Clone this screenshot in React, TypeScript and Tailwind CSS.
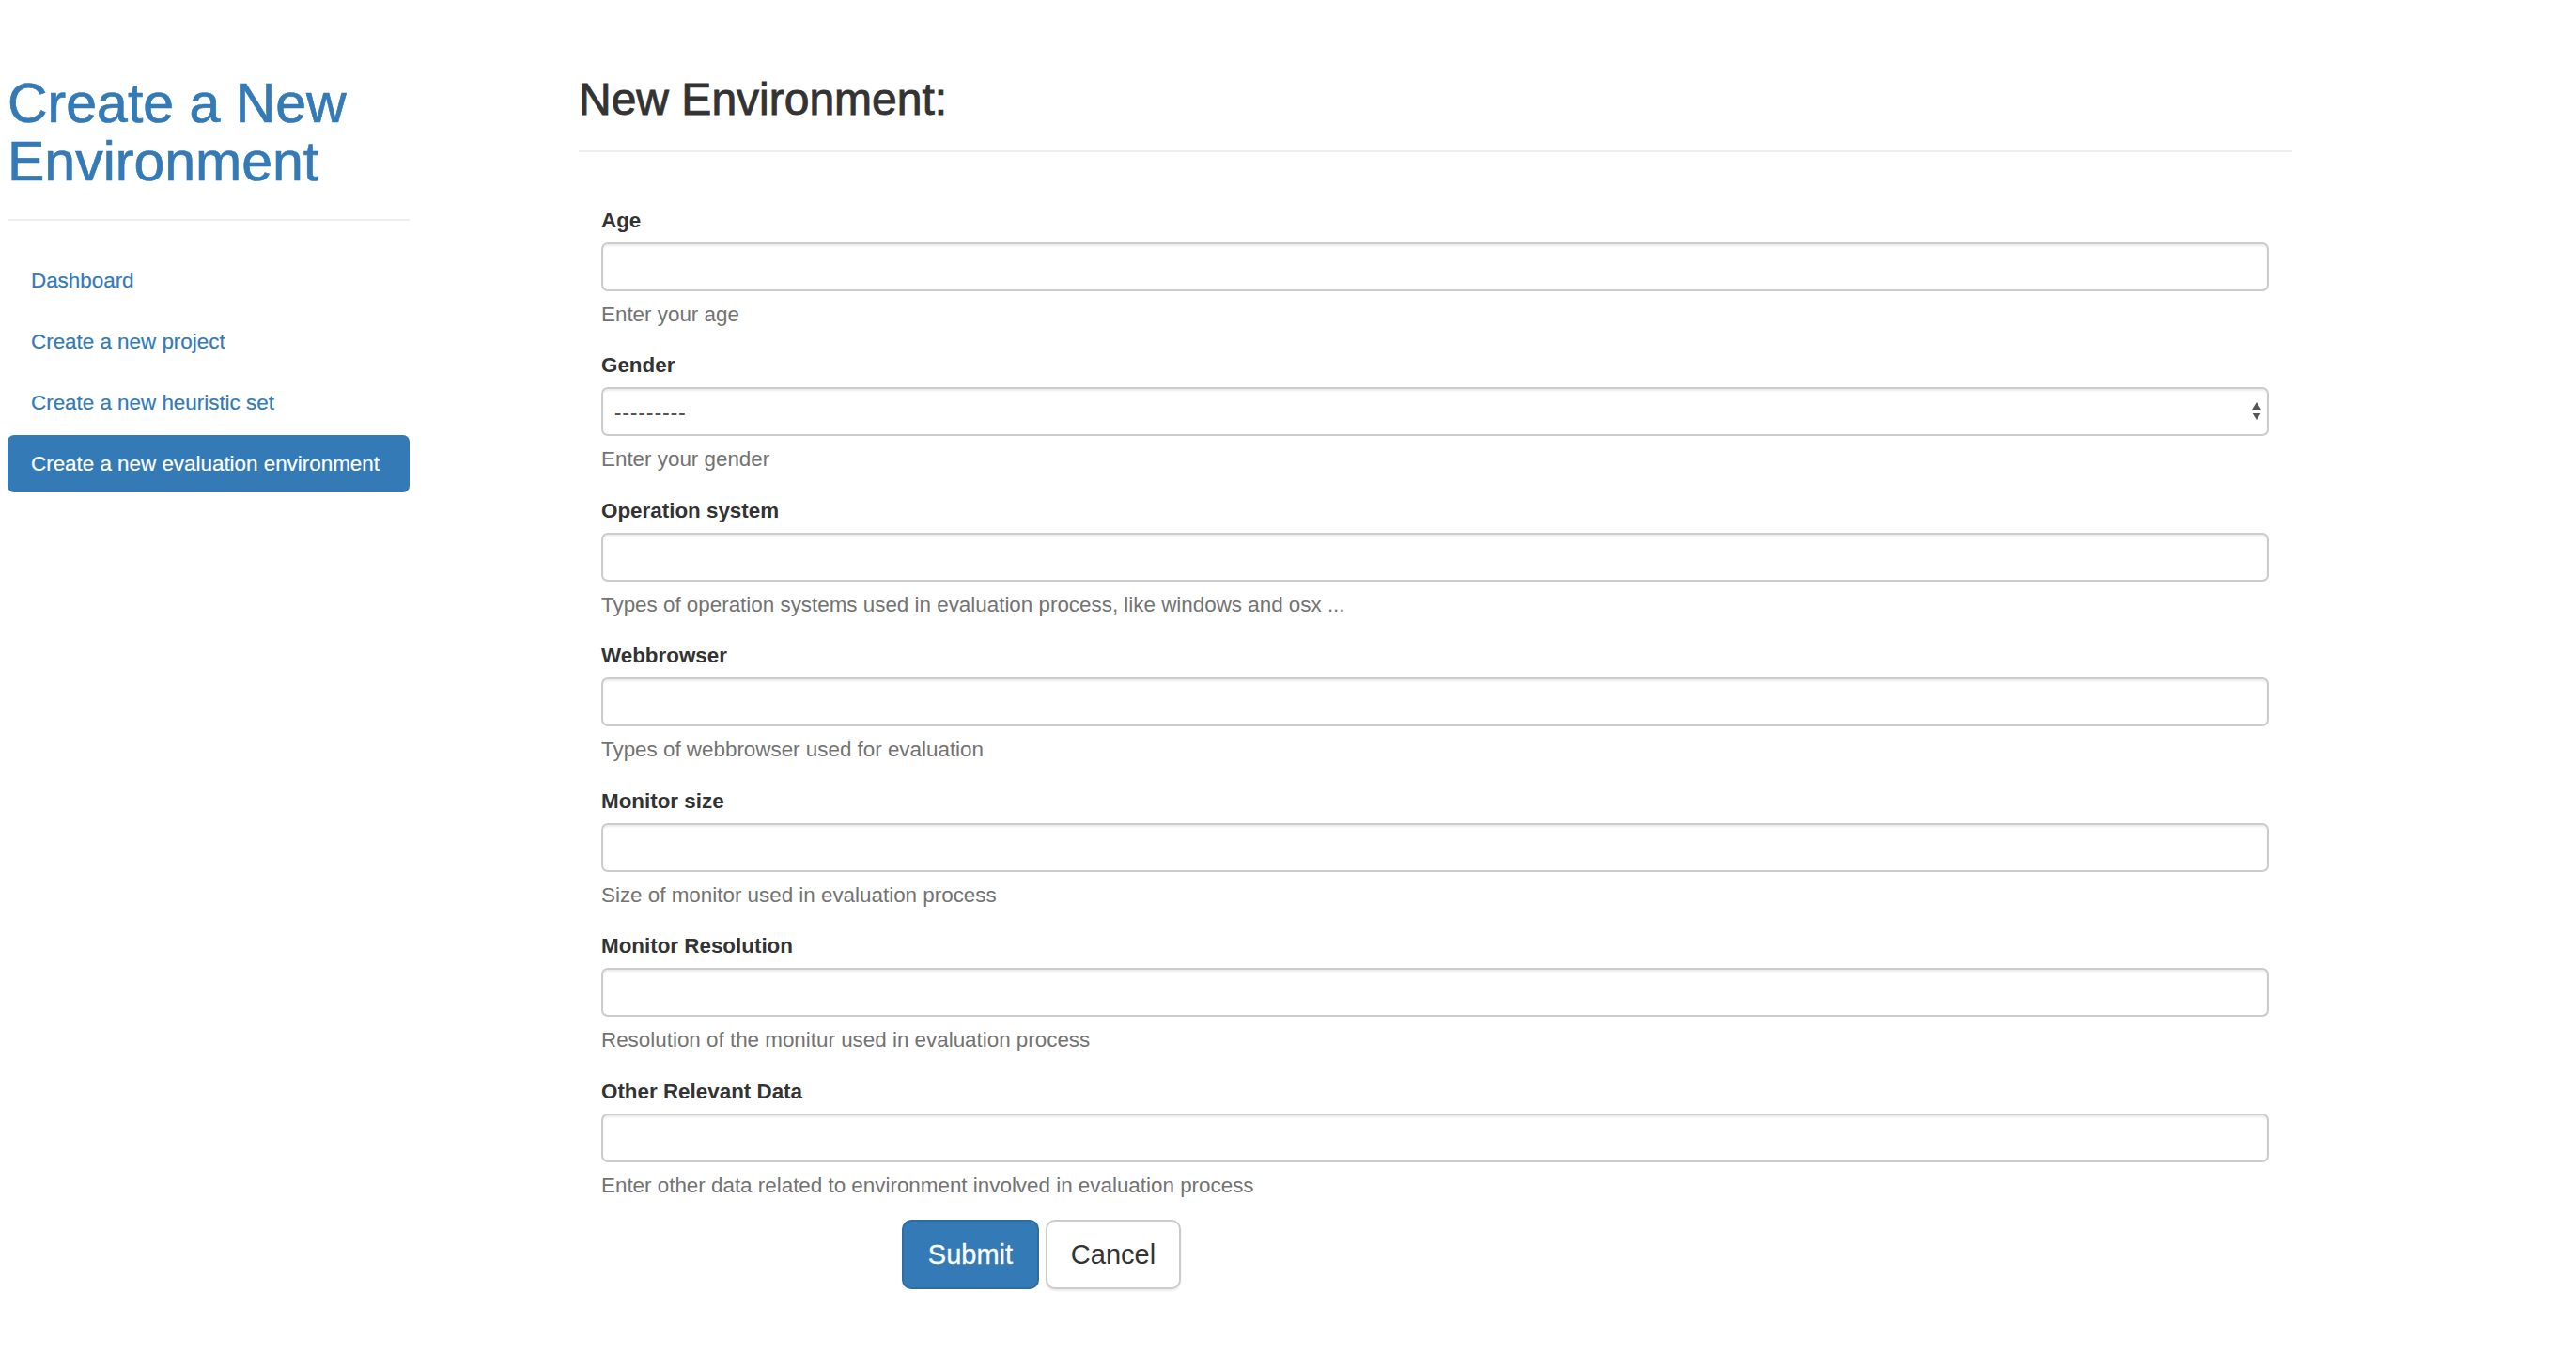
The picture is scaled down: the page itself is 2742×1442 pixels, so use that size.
import React from "react";

const fields: { label: string; help: string; select?: boolean }[] = [
  { label: "Age", help: "Enter your age" },
  { label: "Gender", help: "Enter your gender", select: true },
  {
    label: "Operation system",
    help: "Types of operation systems used in evaluation process, like windows and osx ...",
  },
  { label: "Webbrowser", help: "Types of webbrowser used for evaluation" },
  { label: "Monitor size", help: "Size of monitor used in evaluation process" },
  { label: "Monitor Resolution", help: "Resolution of the monitur used in evaluation process" },
  { label: "Other Relevant Data", help: "Enter other data related to environment involved in evaluation process" },
];

const navItems = [
  "Dashboard",
  "Create a new project",
  "Create a new heuristic set",
  "Create a new evaluation environment",
];

export default function App() {
  return (
    <div
      className="w-[2742px] h-[1442px] bg-white overflow-hidden"
      style={{ fontFamily: '"Liberation Sans", Arial, Helvetica, sans-serif' }}
    >
      <div className="flex pt-[79px] pl-[8px] gap-[180px]">
        {/* Sidebar */}
        <div className="w-[428px] shrink-0">
          <h1 className="text-[59px] leading-[62px] text-[#337ab7] font-normal m-0 [-webkit-text-stroke:0.7px_#337ab7]">
            Create a New
            <br />
            Environment
          </h1>
          <div className="mt-[30px] h-[2px] bg-[#eeeeee]" />
          <ul className="mt-[33px] flex flex-col gap-[4px]">
            {navItems.map((item, i) => {
              const active = i === navItems.length - 1;
              return (
                <li
                  key={item}
                  className={
                    active
                      ? "h-[61px] flex items-center pl-[25px] rounded-[7px] bg-[#337ab7] text-white text-[22.4px] leading-[32px] [-webkit-text-stroke:0.2px_#ffffff]"
                      : "h-[61px] flex items-center pl-[25px] rounded-[7px] text-[#337ab7] text-[22.4px] leading-[32px] [-webkit-text-stroke:0.2px_#337ab7]"
                  }
                >
                  {item}
                </li>
              );
            })}
          </ul>
        </div>

        {/* Main */}
        <div className="w-[1824px] shrink-0">
          <h2 className="text-[48px] leading-[53px] text-[#333333] font-normal m-0 [-webkit-text-stroke:0.9px_#333333]">
            New Environment:
          </h2>
          <div className="mt-[28px] h-[2px] bg-[#eeeeee]" />
          <form className="pt-[57.5px] pl-[24px] pr-[25px]">
            {fields.map((f) => (
              <div key={f.label} className="mb-[24.5px]">
                <label className="block text-[22.4px] leading-[30px] font-bold text-[#333333] mb-[8px]">
                  {f.label}
                </label>
                {f.select ? (
                  <div className="relative h-[52px]">
                    <div className="h-[52px] w-full rounded-[7px] border-2 border-[#cccccc] bg-white shadow-[inset_0_2px_2px_rgba(0,0,0,0.075)] flex items-center pl-[12px] text-[22px] tracking-[1.2px] text-[#555555] font-bold">
                      ---------
                    </div>
                    <svg
                      className="absolute right-[8px] top-[15px]"
                      width="10"
                      height="22"
                      viewBox="0 0 10 22"
                    >
                      <polygon points="5,1 10,9 0,9" fill="#555555" />
                      <polygon points="0,12 10,12 5,20" fill="#555555" />
                    </svg>
                  </div>
                ) : (
                  <div className="h-[52px] w-full rounded-[7px] border-2 border-[#cccccc] bg-white shadow-[inset_0_2px_2px_rgba(0,0,0,0.075)]" />
                )}
                <p className="mt-[10px] text-[22.4px] leading-[30px] text-[#737373]">{f.help}</p>
              </div>
            ))}
            <div className="flex gap-[7px] ml-[320px] -mt-[3px]">
              <button
                type="button"
                className="h-[74px] w-[146px] rounded-[10px] border-2 border-[#2e6da4] bg-[#337ab7] text-white text-[29px] leading-[40px] [-webkit-text-stroke:0.3px_#ffffff]"
              >
                Submit
              </button>
              <button
                type="button"
                className="h-[74px] w-[144px] rounded-[10px] border-2 border-[#cccccc] bg-white text-[#333333] text-[29px] leading-[40px] shadow-[0_2px_2px_rgba(0,0,0,0.08)]"
              >
                Cancel
              </button>
            </div>
          </form>
        </div>
      </div>
    </div>
  );
}
